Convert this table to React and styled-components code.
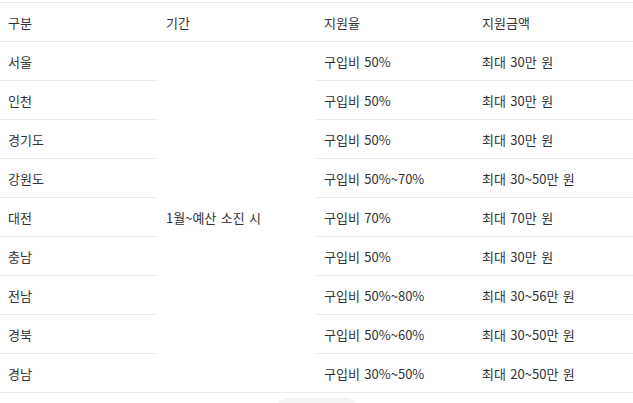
import styled, {createGlobalStyle} from "styled-components";

const GlobalStyle = createGlobalStyle`
  html, body {
    margin: 0;
    padding: 0;
    background: #ffffff;
  }
  body {
    font-family: "Noto Sans CJK KR", "Noto Sans", sans-serif;
    color: #333333;
  }
`;

const Page = styled.div`
  width: 633px;
  padding-top: 2px;
  display: flex;
  flex-direction: column;
  align-items: center;
`;

const Table = styled.table`
  width: 633px;
  border-collapse: collapse;
  table-layout: fixed;
  border-top: 1px solid #ebebeb;
  font-size: 13px;
  word-spacing: 1.5px;
`;

const HeadCell = styled.th`
  height: 38px;
  padding: 0 8px;
  text-align: left;
  font-weight: 400;
  color: #333333;
  border-bottom: 1px solid #ebebeb;
`;

const Cell = styled.td`
  height: 38px;
  padding: 0 8px;
  text-align: left;
  vertical-align: middle;
  color: #333333;
  border-bottom: 1px solid #ebebeb;
  white-space: nowrap;
`;

const MoreButton = styled.div`
  margin-top: 5px;
  width: 90px;
  height: 36px;
  border-radius: 18px;
  background: #f3f3f3;
`;

const rows = [
    {region: "서울", rate: "구입비 50%", amount: "최대 30만 원"},
    {region: "인천", rate: "구입비 50%", amount: "최대 30만 원"},
    {region: "경기도", rate: "구입비 50%", amount: "최대 30만 원"},
    {region: "강원도", rate: "구입비 50%~70%", amount: "최대 30~50만 원"},
    {region: "대전", rate: "구입비 70%", amount: "최대 70만 원"},
    {region: "충남", rate: "구입비 50%", amount: "최대 30만 원"},
    {region: "전남", rate: "구입비 50%~80%", amount: "최대 30~56만 원"},
    {region: "경북", rate: "구입비 50%~60%", amount: "최대 30~50만 원"},
    {region: "경남", rate: "구입비 30%~50%", amount: "최대 20~50만 원"},
];

export default function App() {
    return (<>
        <GlobalStyle/>
        <Page>
            <Table>
                <colgroup>
                    <col style={{width: 158}}/>
                    <col style={{width: 158}}/>
                    <col style={{width: 158}}/>
                    <col style={{width: 159}}/>
                </colgroup>
                <thead>
                <tr>
                    <HeadCell>구분</HeadCell>
                    <HeadCell>기간</HeadCell>
                    <HeadCell>지원율</HeadCell>
                    <HeadCell>지원금액</HeadCell>
                </tr>
                </thead>
                <tbody>
                {rows.map((row, i) => (
                    <tr key={row.region}>
                        <Cell>{row.region}</Cell>
                        {i === 0 && <Cell rowSpan={rows.length}>1월~예산 소진 시</Cell>}
                        <Cell>{row.rate}</Cell>
                        <Cell>{row.amount}</Cell>
                    </tr>
                ))}
                </tbody>
            </Table>
            <MoreButton/>
        </Page>
    </>);
}
